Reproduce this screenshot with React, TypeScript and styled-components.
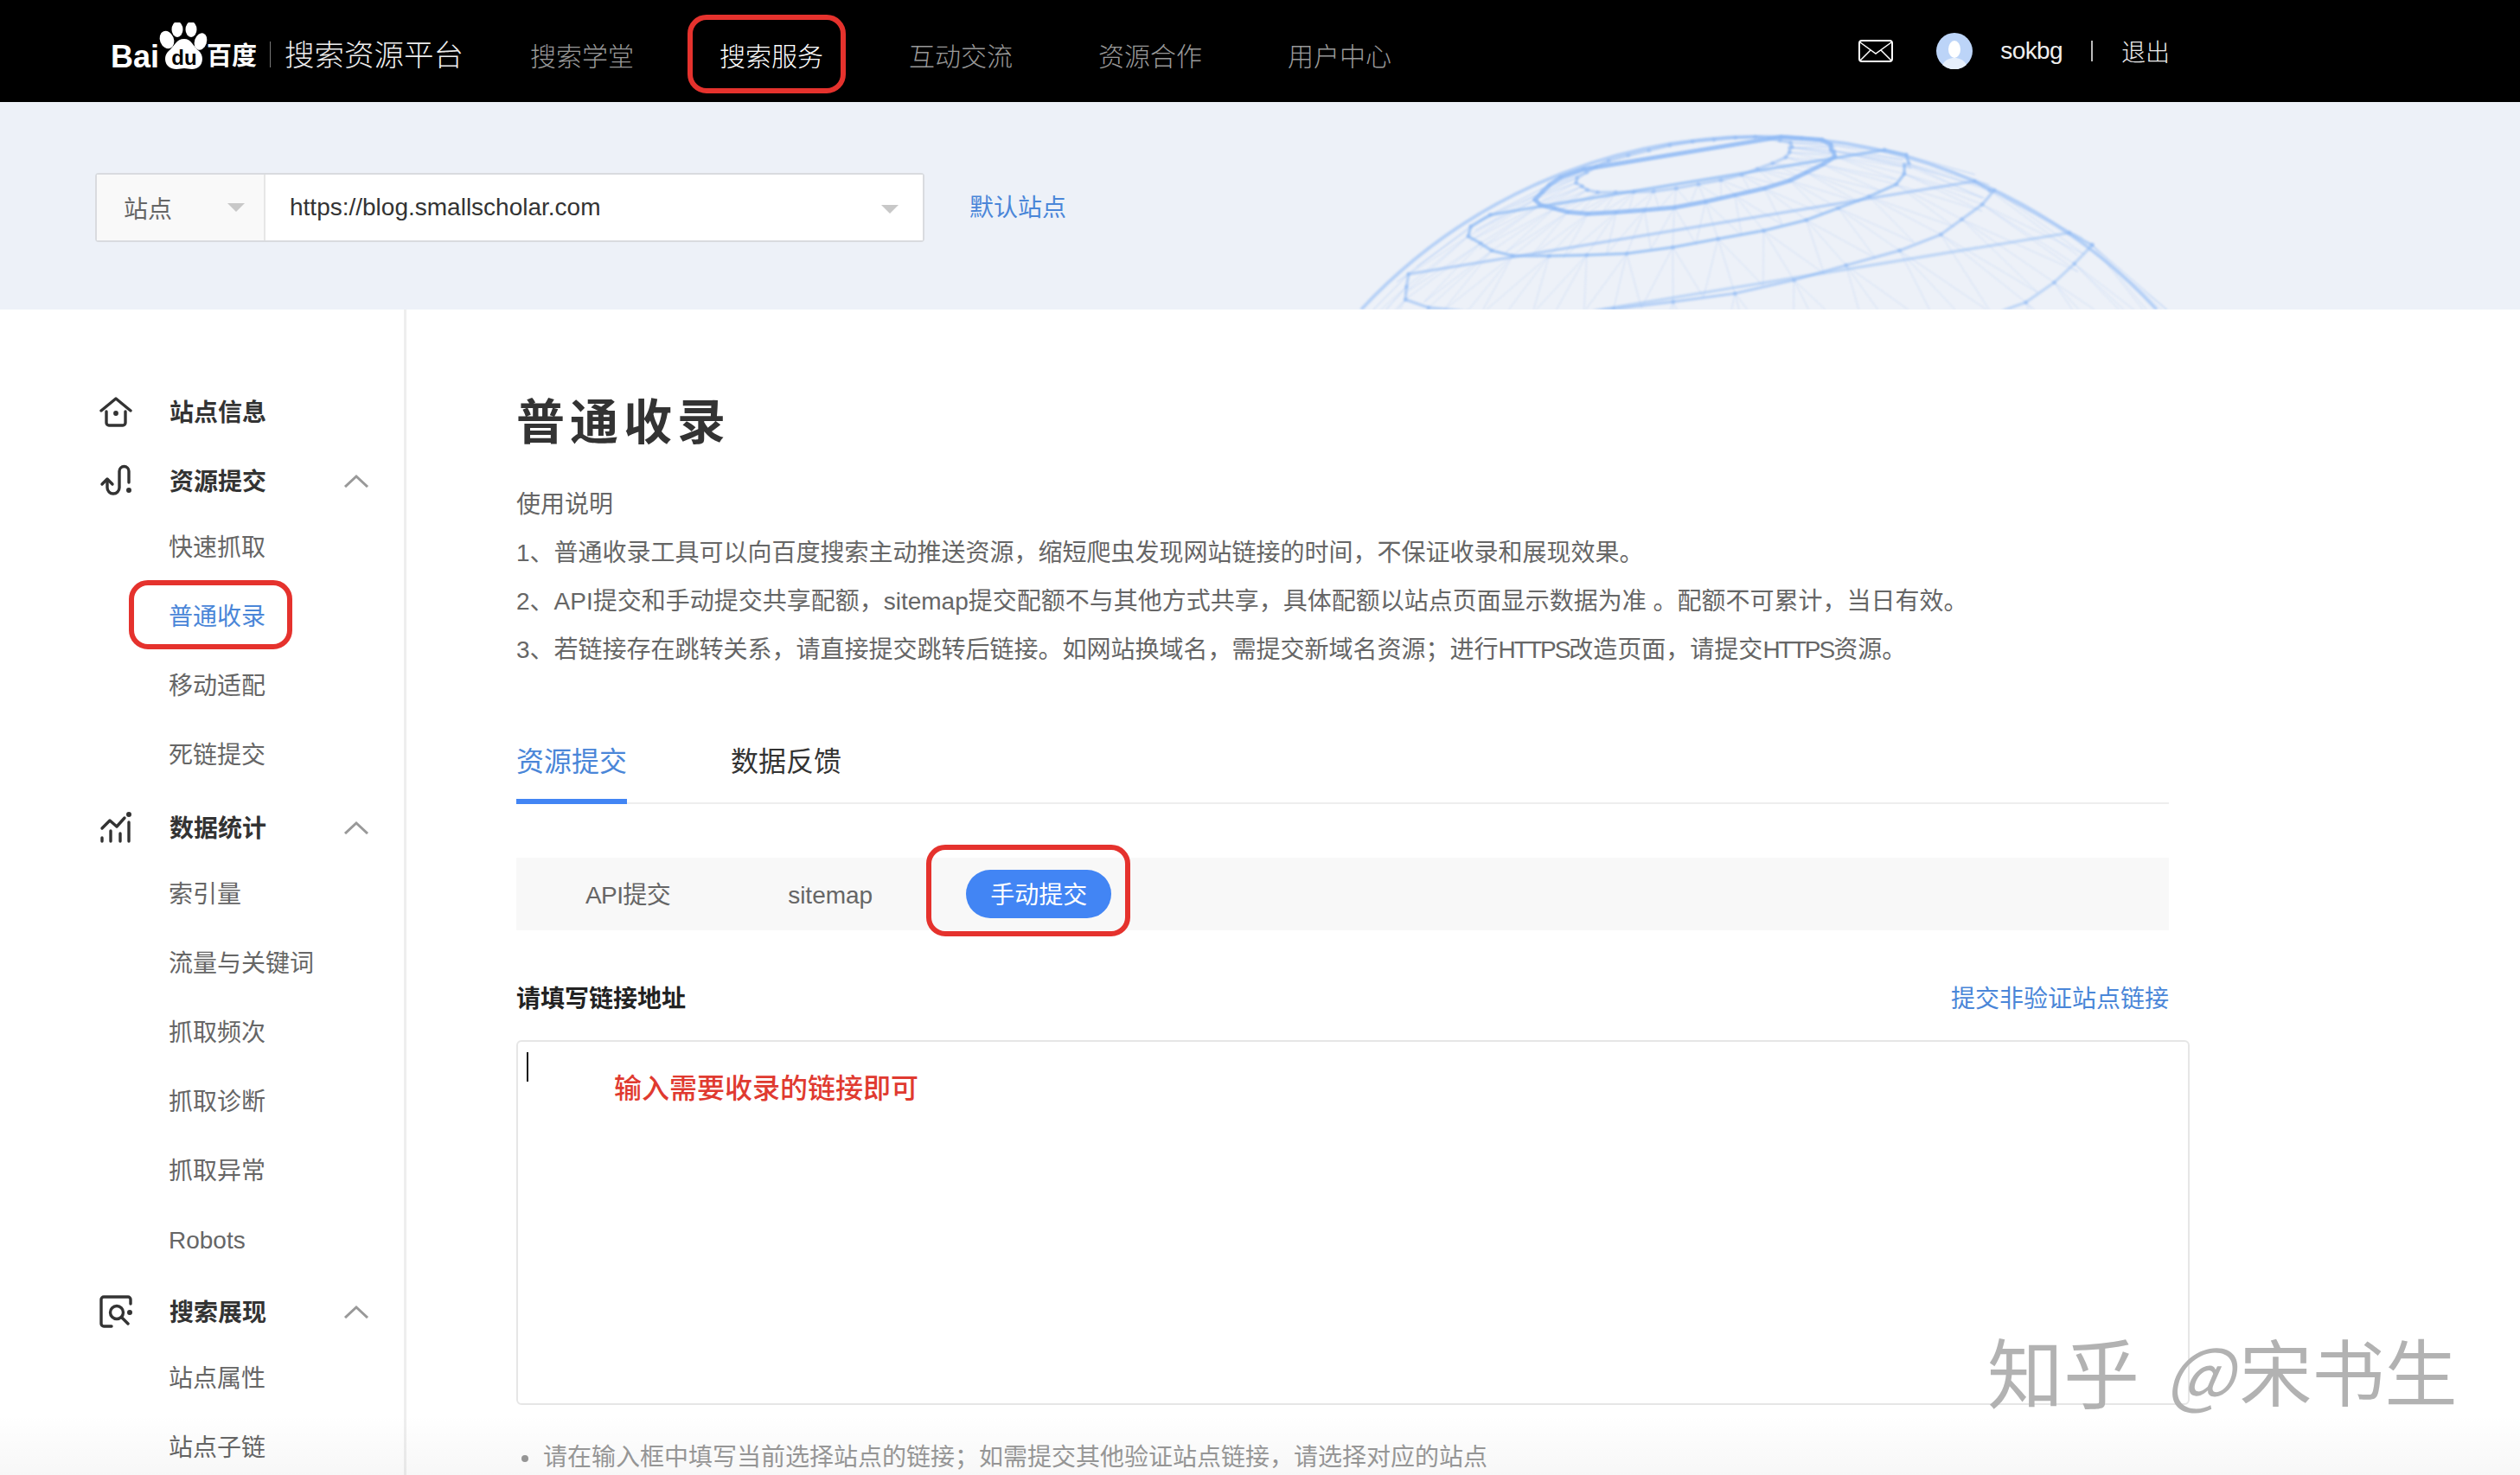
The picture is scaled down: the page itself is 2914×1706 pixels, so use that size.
import React from "react";
import styled, { createGlobalStyle } from "styled-components";

const GlobalStyle = createGlobalStyle`
  html, body {
    margin: 0;
    padding: 0;
    background: #ffffff;
  }
  * {
    box-sizing: border-box;
  }
`;

const Page = styled.div`
  position: relative;
  width: 2914px;
  height: 1706px;
  overflow: hidden;
  background: #ffffff;
  color: #333333;
  font-family: "Liberation Sans", "Noto Sans CJK SC", sans-serif;
  font-size: 28px;
`;

const Header = styled.header`
  display: flex;
  align-items: center;
  height: 118px;
  padding: 0 405px 0 128px;
  background: #000000;
`;

const Logo = styled.svg`
  width: 172px;
  height: 60px;
  margin-top: -7px;
  flex: none;
`;

const LogoDivider = styled.span`
  width: 1px;
  height: 30px;
  margin: 8px 16px 0 12px;
  background: #777777;
`;

const LogoTitle = styled.span`
  width: 284px;
  margin-top: 3px;
  color: #eeeeee;
  font-size: 34.5px;
  font-weight: 300;
`;

const Nav = styled.nav`
  display: flex;
  gap: 99px;
`;

const NavItem = styled.a<{ $active?: boolean }>`
  position: relative;
  height: 118px;
  line-height: 131px;
  font-size: 30px;
  font-weight: 300;
  color: ${(p) => (p.$active ? "#ffffff" : "#999999")};
`;

const Ring = styled.span<{ $t: number; $r: number; $b: number; $l: number }>`
  position: absolute;
  top: ${(p) => p.$t}px;
  right: ${(p) => p.$r}px;
  bottom: ${(p) => p.$b}px;
  left: ${(p) => p.$l}px;
  border: 6px solid #e5322d;
  border-radius: 22px;
  pointer-events: none;
`;

const UserBar = styled.div`
  display: flex;
  align-items: center;
  margin-left: auto;
  color: #eeeeee;
  font-weight: 300;
`;

const MailIcon = styled.svg`
  width: 40px;
  height: 26px;
  margin-right: 50px;
`;

const Avatar = styled.svg`
  width: 42px;
  height: 42px;
  margin-right: 32px;
`;

const UserName = styled.span`
  letter-spacing: -0.6px;
`;

const UserSep = styled.span`
  width: 2px;
  height: 24px;
  margin: 0 33px;
  background: #bbbbbb;
`;

const Banner = styled.section`
  position: relative;
  display: flex;
  align-items: flex-start;
  height: 240px;
  padding: 82px 0 0 110px;
  overflow: hidden;
  background: #edf1f8;
`;

const Globe = styled.svg`
  position: absolute;
  top: 0;
  left: 1500px;
  width: 1100px;
  height: 240px;
  filter: blur(0.8px);
`;

const SelectGroup = styled.div`
  position: relative;
  display: flex;
  width: 959px;
  height: 80px;
  border: 2px solid #d9dbdf;
  border-radius: 4px;
  background: #ffffff;
`;

const SelectPart = styled.div<{ $grow?: boolean }>`
  display: flex;
  align-items: center;
  justify-content: space-between;
  height: 100%;
  flex: ${(p) => (p.$grow ? "1" : "0 0 195px")};
  padding: ${(p) => (p.$grow ? "0 28px 0 28px" : "0 22px 0 31px")};
  background: ${(p) => (p.$grow ? "#ffffff" : "#f9f9f9")};
  border-right: ${(p) => (p.$grow ? "none" : "2px solid #e6e6e6")};
  color: ${(p) => (p.$grow ? "#333333" : "#666666")};
`;

const Caret = styled.span<{ $drop?: number }>`
  width: 0;
  height: 0;
  margin-top: ${(p) => p.$drop ?? 0}px;
  border-left: 10px solid transparent;
  border-right: 10px solid transparent;
  border-top: 10px solid #c8c8c8;
`;

const BlueLink = styled.a`
  color: #4a86d8;
`;

const DefaultLink = styled(BlueLink)`
  margin: 18px 0 0 52px;
`;

const Body = styled.div`
  display: flex;
  height: 1348px;
`;

const Sidebar = styled.aside`
  flex: 0 0 470px;
  padding-top: 78px;
  border-right: 3px solid #eeeeee;
`;

const Group = styled.div<{ $gap: number }>`
  margin-top: ${(p) => p.$gap}px;
`;

const GroupHead = styled.div`
  display: flex;
  align-items: center;
  height: 80px;
  padding: 0 40px 0 115px;
  font-weight: 700;
  color: #333333;
`;

const HeadText = styled.span`
  margin-top: -3px;
`;

const IconSlot = styled.svg`
  width: 38px;
  height: 38px;
  margin-right: 43px;
  flex: none;
  fill: none;
  stroke: #333333;
  stroke-width: 3.4;
  stroke-linecap: round;
  stroke-linejoin: round;
`;

const Chevron = styled.svg`
  width: 30px;
  height: 16px;
  margin-left: auto;
  fill: none;
  stroke: #999999;
  stroke-width: 3;
`;

const SubList = styled.div`
  margin-top: -3px;
`;

const SubItem = styled.div<{ $active?: boolean }>`
  position: relative;
  width: fit-content;
  margin-left: 195px;
  height: 80px;
  line-height: 82px;
  color: ${(p) => (p.$active ? "#4a86d8" : "#666666")};
`;

const Main = styled.main`
  flex: 1;
  padding: 91px 406px 0 127px;
`;

const Title = styled.h1`
  margin: 0;
  height: 80px;
  line-height: 80px;
  font-size: 56px;
  font-weight: 700;
  letter-spacing: 6px;
  color: #333333;
`;

const Notes = styled.div`
  margin-top: 27px;
  line-height: 56px;
  color: #666666;
  white-space: nowrap;
`;

const Narrow = styled.span`
  letter-spacing: -2px;
`;

const TabBar = styled.div`
  display: flex;
  gap: 120px;
  height: 90px;
  margin-top: 60px;
  border-bottom: 2px solid #eeeeee;
`;

const Tab = styled.a<{ $active?: boolean }>`
  height: 90px;
  line-height: 82px;
  font-size: 32px;
  border-bottom: 6px solid ${(p) => (p.$active ? "#4285f4" : "transparent")};
  color: ${(p) => (p.$active ? "#4a86d8" : "#333333")};
`;

const Strip = styled.div`
  display: flex;
  align-items: center;
  gap: 80px;
  height: 84px;
  margin-top: 62px;
  padding-left: 52px;
  background: #f8f8f8;
`;

const Pill = styled.a<{ $active?: boolean; $tight?: boolean }>`
  position: relative;
  height: 56px;
  line-height: 60px;
  padding: 0 28px;
  border-radius: 28px;
  letter-spacing: ${(p) => (p.$tight ? "-0.6px" : "0")};
  background: ${(p) => (p.$active ? "#4285f4" : "transparent")};
  color: ${(p) => (p.$active ? "#ffffff" : "#666666")};
`;

const LabelRow = styled.div`
  display: flex;
  justify-content: space-between;
  align-items: center;
  height: 40px;
  margin-top: 57px;
`;

const Label = styled.label`
  font-weight: 700;
  color: #222222;
`;

const LinkBox = styled.div`
  position: relative;
  width: calc(100% + 24px);
  height: 422px;
  margin-top: 30px;
  padding: 34px 0 0 111px;
  border: 2px solid #e6e6e6;
  border-radius: 6px;
  line-height: 40px;
`;

const TextCaret = styled.span`
  position: absolute;
  top: 12px;
  left: 10px;
  width: 2px;
  height: 34px;
  background: #111111;
`;

const RedNote = styled.span`
  font-size: 32px;
  font-weight: 500;
  color: #e03a30;
`;

const Hint = styled.div`
  position: relative;
  margin-top: 41px;
  padding-left: 31px;
  line-height: 40px;
  color: #999999;
  white-space: nowrap;
  &::before {
    content: "";
    position: absolute;
    top: 17px;
    left: 6px;
    width: 8px;
    height: 8px;
    border-radius: 50%;
    background: #999999;
  }
`;

const Watermark = styled.div`
  position: absolute;
  top: 1528px;
  left: 2298px;
  display: flex;
  align-items: center;
  font-family: "Noto Sans CJK SC", sans-serif;
  font-size: 84px;
  line-height: 112px;
  color: #b2b2b2;
  white-space: nowrap;
  pointer-events: none;
`;

const WatermarkLead = styled.span`
  font-size: 88px;
`;

const WatermarkAt = styled.span`
  margin: 0 6px 0 30px;
  font-style: italic;
`;

const BottomFade = styled.div`
  position: absolute;
  left: 0;
  right: 0;
  bottom: 0;
  height: 70px;
  background: linear-gradient(rgba(0, 0, 0, 0), rgba(0, 0, 0, 0.03));
  pointer-events: none;
`;

// globe wireframe, projected from a tilted sphere
const CX = 534;
const CY = 669;
const R = 629;
const SHEAR = 0.02;
const POLE = [-0.14, -0.97, 0.2];
const U = [0.99, -0.143, 0];
const V = [
  POLE[1] * U[2] - POLE[2] * U[1],
  POLE[2] * U[0] - POLE[0] * U[2],
  POLE[0] * U[1] - POLE[1] * U[0],
];

const project = (colat: number, lon: number) => {
  const t = (colat * Math.PI) / 180;
  const l = (lon * Math.PI) / 180;
  // small wobble so the rings are not perfect ellipses
  const w = 1 + 0.02 * Math.sin(lon * 0.37 + colat);
  const p = [0, 1, 2].map(
    (i) =>
      Math.sin(t) * w * (Math.cos(l) * U[i] + Math.sin(l) * V[i]) +
      Math.cos(t) * POLE[i]
  );
  const x = CX + R * p[0];
  return { x, y: CY + R * p[1] - SHEAR * (x - CX), front: p[2] > -0.02 };
};

const RINGS = [11.5, 16, 24, 33, 45, 58];
const STEP = 12;

const buildGlobe = () => {
  const rings: string[] = [];
  const mesh: string[] = [];
  const nodes: { x: number; y: number }[] = [];
  RINGS.forEach((colat, r) => {
    const pts: string[] = [];
    for (let lon = 0; lon <= 360; lon += STEP) {
      const a = project(colat, lon);
      if (a.front) {
        pts.push(`${a.x.toFixed(1)},${a.y.toFixed(1)}`);
        nodes.push(a);
      }
      if (r < RINGS.length - 1) {
        for (const off of [-STEP / 2, 0, STEP / 2]) {
          const b = project(RINGS[r + 1], lon + off);
          if (a.front && b.front) {
            mesh.push(`M${a.x.toFixed(1)} ${a.y.toFixed(1)}L${b.x.toFixed(1)} ${b.y.toFixed(1)}`);
          }
        }
      }
    }
    rings.push(pts.join(" "));
  });
  return { rings, mesh: mesh.join(""), nodes };
};

const GLOBE = buildGlobe();

const ringOpacity = [0.5, 0.85, 0.7, 0.55, 0.45, 0.35];

const GlobeArt = () => (
  <Globe viewBox="0 0 1100 240">
    <path d={GLOBE.mesh} fill="none" stroke="#a9c9f5" strokeWidth="1" opacity="0.4" />
    <path d="M74 240A629 629 0 0 1 994 240" fill="none" stroke="#a5c7f6" strokeWidth="4" opacity="0.75" />
    {GLOBE.rings.map((pts, i) => (
      <polyline key={i} points={pts} fill="none" stroke="#8fbaf4" strokeWidth={i === 1 ? 5 : 3.5} opacity={ringOpacity[i]} />
    ))}
    {GLOBE.nodes.map((n, i) => (
      <circle key={i} cx={n.x} cy={n.y} r="2.5" fill="#8fb9f3" opacity="0.5" />
    ))}
  </Globe>
);

const BaiduLogo = () => (
  <Logo viewBox="0 0 172 60">
    <text x="0" y="52" fontFamily="Liberation Sans, sans-serif" fontWeight="700" fontSize="36" fill="#ffffff">Bai</text>
    <ellipse cx="65" cy="20" rx="8" ry="10.500" fill="#ffffff" transform="rotate(-22 65 20)" />
    <ellipse cx="77" cy="8" rx="6.500" ry="9" fill="#ffffff" />
    <ellipse cx="93" cy="8" rx="6.500" ry="9" fill="#ffffff" />
    <ellipse cx="104" cy="22" rx="7" ry="10" fill="#ffffff" transform="rotate(18 104 22)" />
    <path d="M85 19c8 0 10 8 17 14 7 6 5 21-8 21-4 0-6-1-9-1s-5 1-9 1c-14 0-16-15-9-21 7-6 9-14 18-14z" fill="#ffffff" />
    <text x="85" y="49" textAnchor="middle" fontFamily="Liberation Sans, sans-serif" fontWeight="700" fontSize="24" fill="#000000">du</text>
    <text x="111" y="49" fontFamily="Noto Sans CJK SC, sans-serif" fontWeight="700" fontSize="29" fill="#ffffff">百度</text>
  </Logo>
);

const HomeIcon = () => (
  <IconSlot viewBox="0 0 38 38">
    <path d="M2 18 19 4l17 14" />
    <path d="M8 19v13a3 3 0 0 0 3 3h16a3 3 0 0 0 3-3V19" />
    <circle cx="19" cy="21" r="1.2" fill="#333333" />
  </IconSlot>
);

const SubmitIcon = () => (
  <IconSlot viewBox="0 0 38 38">
    <path d="M3 23l6-6 6 6" />
    <path d="M9 18v9a7 7 0 0 0 14 0V8a5.500 5.500 0 0 1 11 0v13" />
    <circle cx="34" cy="30" r="1.300" fill="#333333" />
  </IconSlot>
);

const StatsIcon = () => (
  <IconSlot viewBox="0 0 38 38">
    <path d="M3 20 12 11l8 7 9-10" />
    <path d="M3 31v4M13 23v12M24 26v9M34 13v22" />
    <circle cx="34" cy="4" r="1.300" fill="#333333" />
  </IconSlot>
);

const SearchIcon = () => (
  <IconSlot viewBox="0 0 38 38">
    <path d="M36 10V5a3 3 0 0 0-3-3H5a3 3 0 0 0-3 3v28a3 3 0 0 0 3 3h9" />
    <circle cx="20" cy="20" r="7.500" />
    <path d="M26 26l7 7" />
    <circle cx="35" cy="20" r="1.300" fill="#333333" />
  </IconSlot>
);

const ChevronUp = () => (
  <Chevron viewBox="0 0 30 16">
    <path d="M2 15 15 3l13 12" />
  </Chevron>
);

const navItems = ["搜索学堂", "搜索服务", "互动交流", "资源合作", "用户中心"];

const menu = [
  { title: "站点信息", icon: <HomeIcon />, gap: 0, items: [] as string[], chevron: false },
  { title: "资源提交", icon: <SubmitIcon />, gap: 0, items: ["快速抓取", "普通收录", "移动适配", "死链提交"], chevron: true },
  { title: "数据统计", icon: <StatsIcon />, gap: 4, items: ["索引量", "流量与关键词", "抓取频次", "抓取诊断", "抓取异常", "Robots"], chevron: true },
  { title: "搜索展现", icon: <SearchIcon />, gap: 3, items: ["站点属性", "站点子链"], chevron: true },
];

export default function App() {
  return (
    <Page>
      <GlobalStyle />
      <Header>
        <BaiduLogo />
        <LogoDivider />
        <LogoTitle>搜索资源平台</LogoTitle>
        <Nav>
          {navItems.map((item) => (
            <NavItem key={item} $active={item === "搜索服务"}>
              {item}
              {item === "搜索服务" && <Ring $t={17} $r={-26} $b={10} $l={-37} />}
            </NavItem>
          ))}
        </Nav>
        <UserBar>
          <MailIcon viewBox="0 0 40 26" fill="none" stroke="#ffffff" strokeWidth="2">
            <rect x="1" y="1" width="38" height="24" rx="3" />
            <path d="M2 3l18 13L38 3M2 24l12-12M38 24 26 12" strokeWidth="1.500" />
          </MailIcon>
          <Avatar viewBox="0 0 42 42">
            <circle cx="21" cy="21" r="21" fill="#bcd4f8" />
            <ellipse cx="21" cy="19" rx="7" ry="10" fill="#ffffff" />
            <path d="M7 37c3-6 9-8 14-8s11 2 14 8a21 21 0 0 1-28 0z" fill="#e6effc" />
          </Avatar>
          <UserName>sokbg</UserName>
          <UserSep />
          <span>退出</span>
        </UserBar>
      </Header>

      <Banner>
        <GlobeArt />
        <SelectGroup>
          <SelectPart>
            站点
            <Caret />
          </SelectPart>
          <SelectPart $grow>
            https://blog.smallscholar.com
            <Caret $drop={4} />
          </SelectPart>
        </SelectGroup>
        <DefaultLink>默认站点</DefaultLink>
      </Banner>

      <Body>
        <Sidebar>
          {menu.map((group) => (
            <Group key={group.title} $gap={group.gap}>
              <GroupHead>
                {group.icon}
                <HeadText>{group.title}</HeadText>
                {group.chevron && <ChevronUp />}
              </GroupHead>
              {group.items.length > 0 && (
                <SubList>
                  {group.items.map((item) => (
                    <SubItem key={item} $active={item === "普通收录"}>
                      {item}
                      {item === "普通收录" && <Ring $t={-2} $r={-31} $b={2} $l={-46} />}
                    </SubItem>
                  ))}
                </SubList>
              )}
            </Group>
          ))}
        </Sidebar>

        <Main>
          <Title>普通收录</Title>
          <Notes>
            <div>使用说明</div>
            <div>1、普通收录工具可以向百度搜索主动推送资源，缩短爬虫发现网站链接的时间，不保证收录和展现效果。</div>
            <div>2、API提交和手动提交共享配额，sitemap提交配额不与其他方式共享，具体配额以站点页面显示数据为准 。配额不可累计，当日有效。</div>
            <div>
              3、若链接存在跳转关系，请直接提交跳转后链接。如网站换域名，需提交新域名资源；进行<Narrow>HTTPS</Narrow>改造页面，请提交<Narrow>HTTPS</Narrow>资源。
            </div>
          </Notes>

          <TabBar>
            <Tab $active>资源提交</Tab>
            <Tab>数据反馈</Tab>
          </TabBar>

          <Strip>
            <Pill $tight>API提交</Pill>
            <Pill>sitemap</Pill>
            <Pill $active>
              手动提交
              <Ring $t={-29} $r={-22} $b={-21} $l={-46} />
            </Pill>
          </Strip>

          <LabelRow>
            <Label>请填写链接地址</Label>
            <BlueLink>提交非验证站点链接</BlueLink>
          </LabelRow>

          <LinkBox>
            <TextCaret />
            <RedNote>输入需要收录的链接即可</RedNote>
          </LinkBox>

          <Hint>请在输入框中填写当前选择站点的链接；如需提交其他验证站点链接，请选择对应的站点</Hint>
        </Main>
      </Body>

      <BottomFade />
      <Watermark>
        <WatermarkLead>知乎</WatermarkLead>
        <WatermarkAt>@</WatermarkAt>
        宋书生
      </Watermark>
    </Page>
  );
}
